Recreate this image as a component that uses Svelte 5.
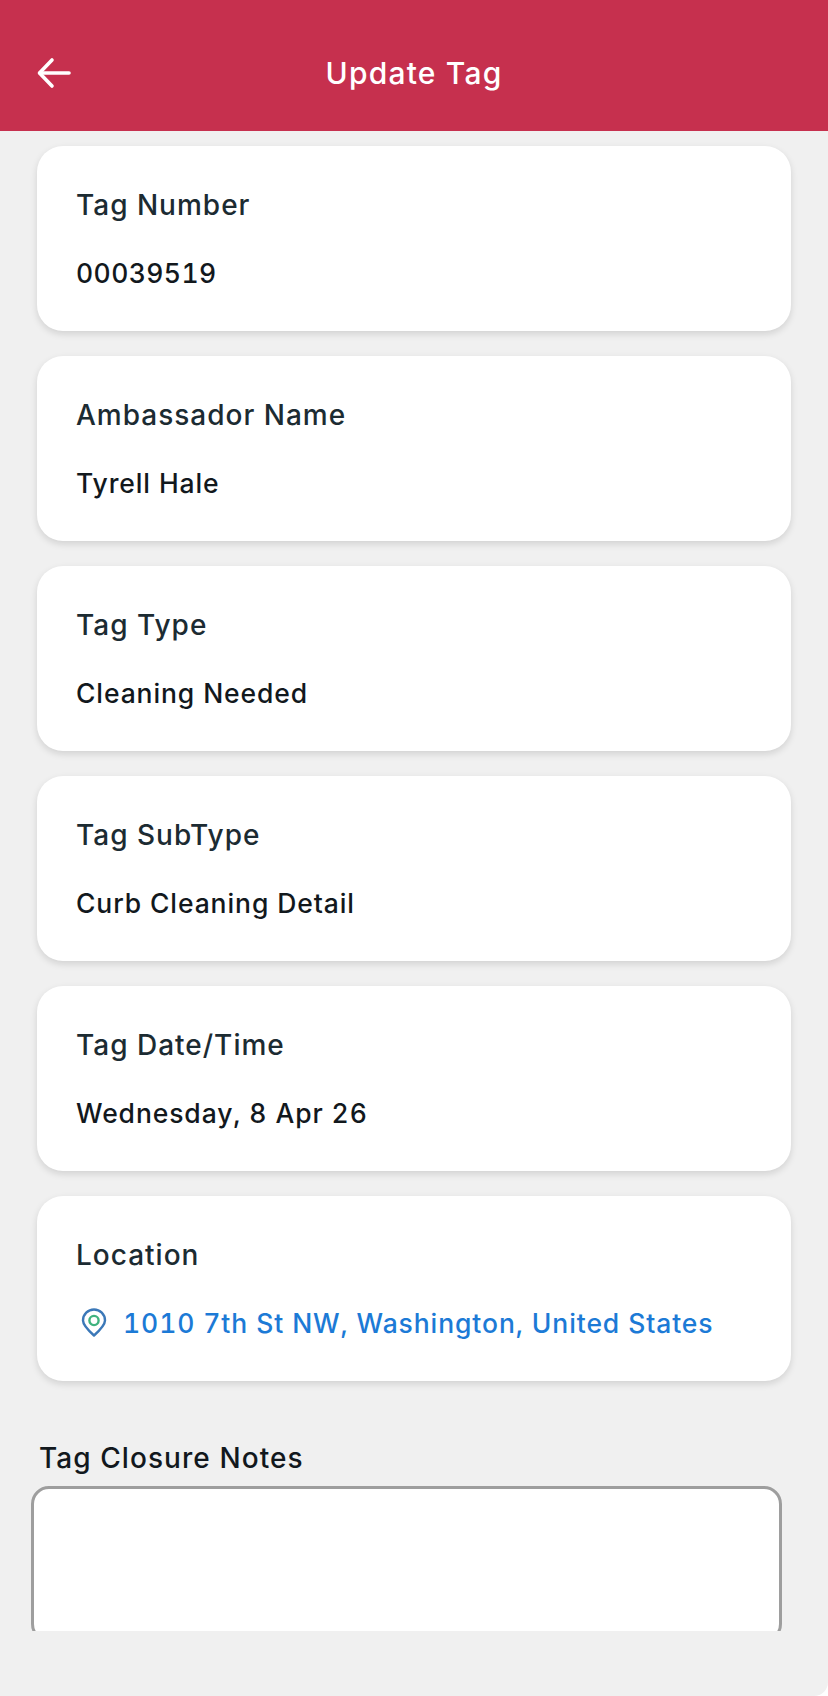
<script lang="ts">
  const cards = [
    { label: 'Tag Number', value: '00039519' },
    { label: 'Ambassador Name', value: 'Tyrell Hale' },
    { label: 'Tag Type', value: 'Cleaning Needed' },
    { label: 'Tag SubType', value: 'Curb Cleaning Detail' },
    { label: 'Tag Date/Time', value: 'Wednesday, 8 Apr 26' }
  ]
</script>

<div class="screen">
  <header class="bar">
    <button class="back" aria-label="Back">
      <svg width="34" height="32" viewBox="0 0 34 32" fill="none" stroke="#fff" stroke-width="3.6" stroke-linecap="round" stroke-linejoin="round">
        <path d="M32 16H3" />
        <path d="M15 3 2.500 16 15 29" />
      </svg>
    </button>
    <h1>Update Tag</h1>
  </header>

  <main class="scroll">
    {#each cards as card}
      <section class="card">
        <h2>{card.label}</h2>
        <p>{card.value}</p>
      </section>
    {/each}

    <section class="card">
      <h2>Location</h2>
      <p class="location">
        <svg width="28" height="30" viewBox="0 0 28 30" fill="none">
          <path d="M14 27.500C9 23 3 17.500 3 12.500A11 11 0 0 1 25 12.500C25 17.500 19 23 14 27.500Z" stroke="#3b78b8" stroke-width="2.400" stroke-linejoin="round" />
          <circle cx="14" cy="12.500" r="4.600" stroke="#3fb27f" stroke-width="2.400" />
        </svg>
        <span>1010 7th St NW, Washington, United States</span>
      </p>
    </section>

    <label class="notes">
      <span>Tag Closure Notes</span>
      <textarea></textarea>
    </label>
  </main>
</div>

<style>
  :global(body) {
    background: #fff;
  }

  .screen {
    display: flex;
    flex-direction: column;
    height: 1696px;
    overflow: hidden;
    border-bottom-right-radius: 14px;
    background: #f0f0f0;
    font-family: Inter, 'Liberation Sans', sans-serif;
  }

  .bar {
    flex: none;
    display: flex;
    align-items: center;
    height: 131px;
    padding-top: 14px;
    box-sizing: border-box;
    position: relative;
    background: #c6304e;
  }

  .back {
    display: flex;
    margin-left: 37px;
    padding: 0;
    border: 0;
    background: none;
  }

  h1 {
    position: absolute;
    left: 0;
    right: 0;
    margin: 0;
    text-align: center;
    font-size: 30px;
    font-weight: 500;
    letter-spacing: 1.2px;
    color: #fff;
  }

  .scroll {
    flex: none;
    height: 1500px;
    overflow: hidden;
    box-sizing: border-box;
    padding-top: 15px;
  }

  .card {
    box-sizing: border-box;
    height: 185px;
    margin: 0 37px 25px 37px;
    padding: 43px 39px 0;
    border-radius: 26px;
    background: #fff;
    box-shadow: 0 3px 7px rgba(0, 0, 0, 0.13);
  }

  .card:first-child p {
    letter-spacing: 0.4px;
  }

  h2 {
    margin: 0;
    font-size: 28px;
    line-height: 32px;
    font-weight: 500;
    letter-spacing: 1px;
    color: #1c2b32;
  }

  p {
    margin: 36px 0 0;
    font-size: 26.5px;
    line-height: 32px;
    font-weight: 500;
    letter-spacing: 0.9px;
    font-variant-numeric: tabular-nums;
    color: #12181d;
  }

  .location {
    display: flex;
    align-items: center;
    gap: 15px;
    margin-left: 4px;
    letter-spacing: 0.9px;
    color: #1c7ad6;
  }

  .notes {
    display: block;
    margin: 0 46px 0 31px;
    padding-top: 36px;
  }

  .notes span {
    display: block;
    margin: 0 0 12px 8px;
    font-size: 28px;
    line-height: 32px;
    font-weight: 500;
    letter-spacing: 1.07px;
    color: #12181d;
  }

  textarea {
    display: block;
    box-sizing: border-box;
    width: 100%;
    height: 156px;
    padding: 0;
    border: 3px solid #9e9e9e;
    border-radius: 18px;
    background: #fff;
    resize: none;
    outline: none;
  }
</style>
